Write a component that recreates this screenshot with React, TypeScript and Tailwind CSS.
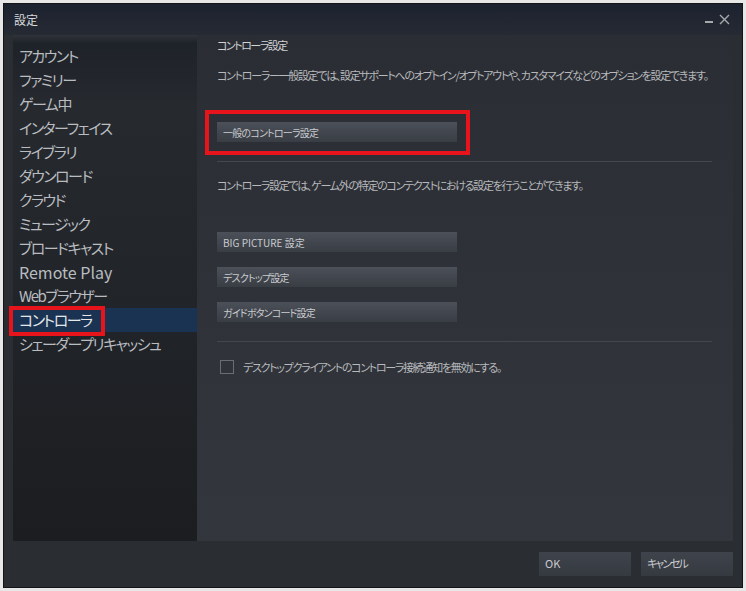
import { useState } from "react";

const menu = [
  "アカウント",
  "ファミリー",
  "ゲーム中",
  "インターフェイス",
  "ライブラリ",
  "ダウンロード",
  "クラウド",
  "ミュージック",
  "ブロードキャスト",
  "Remote Play",
  "Webブラウザー",
  "コントローラ",
  "シェーダープリキャッシュ",
];

const font = "[font-family:'Noto_Sans_CJK_JP',sans-serif] [font-feature-settings:'palt']";

function PanelButton({ label, highlight, latin }: { label: string; highlight?: boolean; latin?: boolean }) {
  return (
    <div className="relative w-[240px]">
      <div
        className={`flex h-[20px] items-center bg-[linear-gradient(to_bottom,#4b5059,#393d44)] pl-[6px] text-[10px] text-[#c9cbce] ${
          latin ? "tracking-[0px]" : "tracking-[-0.8px]"
        }`}
      >
        {label}
      </div>
      {highlight && (
        <div className="pointer-events-none absolute left-[-12px] top-[-12px] h-[45px] w-[265px] border-[4px] border-[#e8141c]" />
      )}
    </div>
  );
}

export default function App() {
  const [selected] = useState("コントローラ");
  const [disabled, setDisabled] = useState(false);

  return (
    <div className={`h-[591px] w-[746px] bg-[#e7e7e7] p-[3px] ${font}`}>
      <div className="flex h-full w-full flex-col border border-[#121418] bg-[#2a2d32]">
        {/* title bar */}
        <div className="flex h-[31px] items-center justify-between bg-[linear-gradient(to_bottom,#1d2230,#252a33)] pl-[10px] pr-[12px]">
          <span className="text-[12px] text-[#d6d8db]">設定</span>
          <div className="flex items-center gap-[6px] text-[#a7aaad]">
            <span className="mt-[4px] h-[2px] w-[8px] bg-[#a7aaad]" />
            <svg width="11" height="11" viewBox="0 0 11 11">
              <path d="M1 1L10 10M10 1L1 10" stroke="#a7aaad" strokeWidth="1.4" />
            </svg>
          </div>
        </div>

        {/* panels */}
        <div className="flex h-[506px] pl-[9px] pr-[9px]">
          <div className="w-[184px] bg-[linear-gradient(to_bottom,#30343a_0px,#1e2229_8px,#262a2f_70px,#1b1d20_100%)] pl-[6px] pt-[9px]">
            {menu.map((m) => (
              <div
                key={m}
                className={`relative -ml-[6px] flex h-[24px] items-center whitespace-nowrap pl-[6px] ${
                  m === "Remote Play" ? "text-[16px]" : "text-[15px] tracking-[-1.5px]"
                } ${m === selected ? "bg-[#1a3352] text-[#e4e7ea]" : "text-[#b9bcc0]"}`}
              >
                {m}
                {m === selected && (
                  <div className="pointer-events-none absolute left-[-4px] top-[-2px] h-[30px] w-[96px] border-[4px] border-[#e8141c]" />
                )}
              </div>
            ))}
          </div>

          <div className="flex-1 bg-[linear-gradient(to_bottom,#2a2d33,#33363d)] pl-[20px]">
            <div className="h-[20px] text-[11px] leading-[20px] tracking-[-1.5px] text-[#d0d2d5]">コントローラ設定</div>
            <div className="mt-[10px] h-[20px] whitespace-nowrap text-[11px] leading-[20px] tracking-[-1.3px] text-[#b7b9bc]">
              コントローラー一般設定では、設定サポートへのオプトイン/オプトアウトや、カスタマイズなどのオプションを設定できます。
            </div>
            <div className="mt-[37px]">
              <PanelButton label="一般のコントローラ設定" highlight />
            </div>
            <div className="mt-[19px] h-px w-[495px] bg-[#44474d]" />
            <div className="mt-[13px] h-[20px] whitespace-nowrap text-[11px] leading-[20px] tracking-[-1.3px] text-[#b7b9bc]">
              コントローラ設定では、ゲーム外の特定のコンテクストにおける設定を行うことができます。
            </div>
            <div className="mt-[37px] flex flex-col gap-[15px]">
              <PanelButton label="BIG PICTURE 設定" latin />
              <PanelButton label="デスクトップ設定" />
              <PanelButton label="ガイドボタンコード設定" />
            </div>
            <div className="mt-[19px] h-px w-[495px] bg-[#44474d]" />
            <label className="mt-[15px] flex h-[20px] cursor-pointer items-center gap-[9px] pl-[3px] text-[11px] tracking-[-1.3px] text-[#b7b9bc]">
              <span
                onClick={() => setDisabled(!disabled)}
                className="flex h-[14px] w-[14px] items-center justify-center border border-[#6a6d72]"
              >
                {disabled && <span className="h-[8px] w-[8px] bg-[#b7b9bc]" />}
              </span>
              デスクトップクライアントのコントローラ接続通知を無効にする。
            </label>
          </div>
        </div>

        {/* footer */}
        <div className="flex flex-1 items-start justify-end gap-[10px] pr-[9px] pt-[11px]">
          <div className="flex h-[24px] w-[92px] items-center bg-[linear-gradient(to_bottom,#3f434b,#353940)] pb-[2px] pl-[6px] text-[11px] text-[#c9cbce]">
            OK
          </div>
          <div className="flex h-[24px] w-[92px] items-center bg-[linear-gradient(to_bottom,#3f434b,#353940)] pb-[2px] pl-[6px] text-[11px] tracking-[-2px] text-[#c9cbce]">
            キャンセル
          </div>
        </div>
      </div>
    </div>
  );
}
